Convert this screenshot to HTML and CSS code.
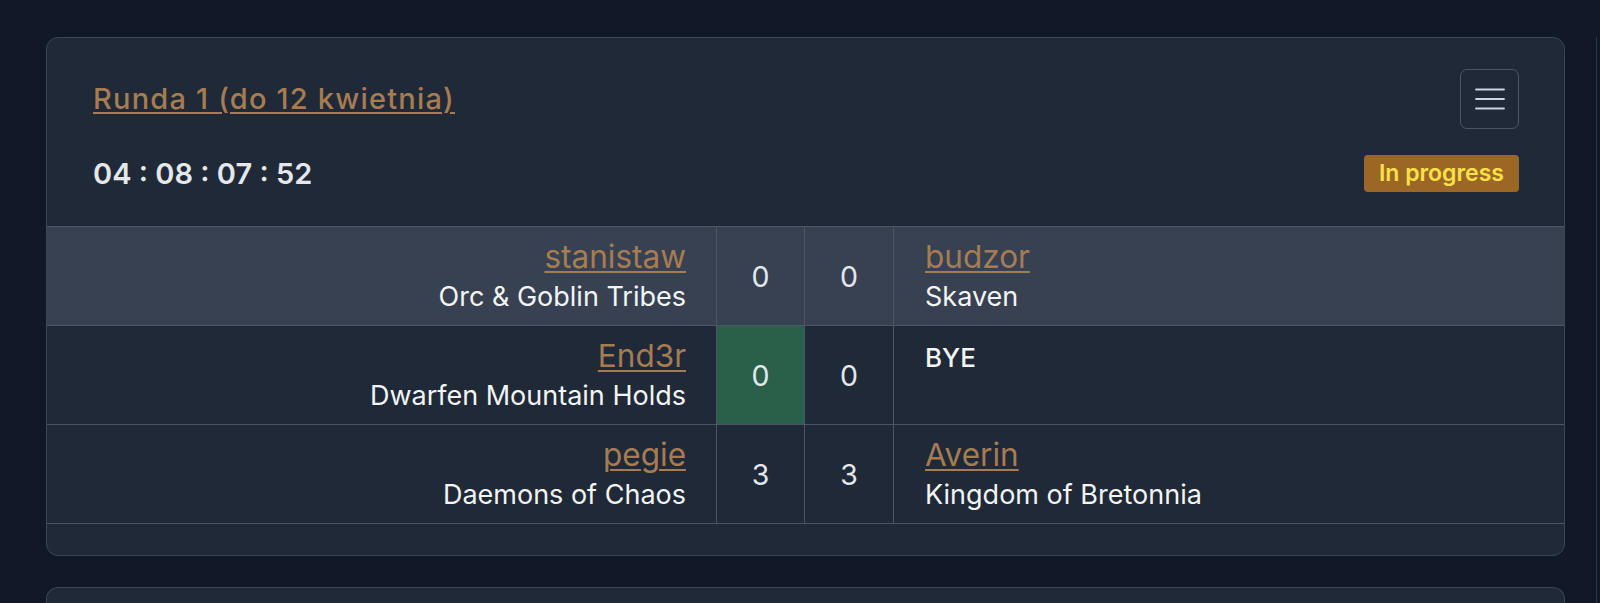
FILE: index.html
```html
<!DOCTYPE html>
<html lang="pl">
<head>
<meta charset="utf-8">
<title>Runda 1</title>
<link rel="stylesheet" href="styles.css">
</head>
<body>
<div class="page">
  <div class="col-main">
    <section class="card">
      <header class="card-head">
        <div class="head-row">
          <a class="round-title" href="#">Runda 1 (do 12 kwietnia)</a>
          <button class="menu-btn" type="button" aria-label="Menu">
            <svg width="30" height="30" viewBox="0 0 30 30" aria-hidden="true">
              <path d="M1 5.5H29M1 15H29M1 24.5H29" stroke="#cbd5e1" stroke-width="1.8" stroke-linecap="round" fill="none"/>
            </svg>
          </button>
        </div>
        <div class="head-row second">
          <span class="timer">04 : 08 : 07 : 52</span>
          <span class="badge">In progress</span>
        </div>
      </header>

      <div class="pairings">
        <div class="pair highlight">
          <div class="player left">
            <div class="name-line"><a class="player-link" href="#">stanistaw</a></div>
            <div class="faction">Orc &amp; Goblin Tribes</div>
          </div>
          <div class="score">0</div>
          <div class="score">0</div>
          <div class="player right">
            <div class="name-line"><a class="player-link" href="#">budzor</a></div>
            <div class="faction">Skaven</div>
          </div>
        </div>

        <div class="pair">
          <div class="player left">
            <div class="name-line"><a class="player-link" href="#">End3r</a></div>
            <div class="faction">Dwarfen Mountain Holds</div>
          </div>
          <div class="score win">0</div>
          <div class="score">0</div>
          <div class="player right">
            <div class="name-line"><span class="bye">BYE</span></div>
          </div>
        </div>

        <div class="pair">
          <div class="player left">
            <div class="name-line"><a class="player-link" href="#">pegie</a></div>
            <div class="faction">Daemons of Chaos</div>
          </div>
          <div class="score">3</div>
          <div class="score">3</div>
          <div class="player right">
            <div class="name-line"><a class="player-link" href="#">Averin</a></div>
            <div class="faction">Kingdom of Bretonnia</div>
          </div>
        </div>
      </div>
      <div class="card-foot"></div>
    </section>

    <section class="card next"></section>
  </div>
  <div class="col-side"></div>
</div>
</body>
</html>
```
FILE: styles.css
```css
* { box-sizing: border-box; }

html, body {
  margin: 0;
  height: 100%;
  background: #111827;
  overflow: hidden;
}

body {
  font-family: "Inter", "Noto Sans", sans-serif;
  color: #f3f4f6;
}

.page {
  display: flex;
  gap: 31px;
  height: 603px;
  padding: 37px 0 0 46px;
  overflow: hidden;
}

.col-main {
  width: 1519px;
  flex: none;
  display: flex;
  flex-direction: column;
  gap: 31px;
}

.col-side {
  flex: 1;
  border-left: 1px solid #2b3444;
}

.card {
  background: #1f2937;
  border: 1px solid #3b4554;
  border-radius: 12px;
  overflow: hidden;
}

.card.next {
  height: 16px;
  border-bottom: 0;
  border-radius: 12px 12px 0 0;
}

.card-head {
  padding: 31px 45px 34px 46px;
  display: flex;
  flex-direction: column;
  gap: 26px;
}

.head-row {
  display: flex;
  align-items: center;
  justify-content: space-between;
}

.round-title {
  font-size: 29px;
  font-weight: 500;
  letter-spacing: 1.2px;
  line-height: 40px;
  color: #a67c52;
  text-decoration: underline;
  text-decoration-thickness: 2px;
  text-underline-offset: 3px;
}

.menu-btn {
  width: 59px;
  height: 60px;
  padding: 0;
  display: flex;
  align-items: center;
  justify-content: center;
  background: transparent;
  border: 1px solid #4b5563;
  border-radius: 7px;
}

.menu-btn svg { display: block; }

.timer {
  font-size: 29px;
  font-weight: 600;
  line-height: 37px;
  color: #e5e7eb;
}

.badge {
  height: 37px;
  line-height: 37px;
  padding: 0 15px;
  border-radius: 4px;
  background: #9a6824;
  color: #fde047;
  font-size: 23px;
  font-weight: 600;
}

.pairings {
  border-top: 1px solid #4b5563;
}

.pair {
  display: grid;
  grid-template-columns: 1fr 88px 89px 1fr;
  border-bottom: 1px solid #4b5563;
}

.pair.highlight {
  background: #374151;
}

.pair > div {
  border-right: 1px solid #4b5563;
}

.pair > div:last-child {
  border-right: none;
}

.player {
  padding: 10px 31px 8px;
  min-height: 98px;
}

.player.left {
  text-align: right;
  padding-right: 30px;
}

.name-line {
  font-size: 31.5px;
  line-height: 40px;
}

.player-link {
  color: #a67c52;
  text-decoration: underline;
  text-decoration-thickness: 2px;
  text-underline-offset: 3px;
}

.bye {
  font-size: 26px;
  font-weight: 500;
  color: #f3f4f6;
}

.faction {
  font-size: 27px;
  line-height: 40px;
  color: #f3f4f6;
}

.score {
  display: flex;
  align-items: center;
  justify-content: center;
  font-size: 28.5px;
  color: #e5e7eb;
}

.score.win {
  background: #2a6049;
}

.card-foot {
  height: 31px;
}
```
